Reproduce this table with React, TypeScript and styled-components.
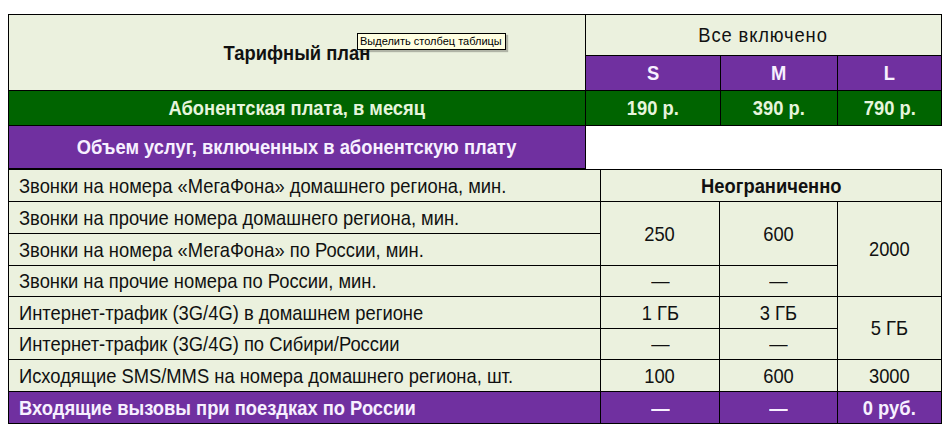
import React from "react";
import styled, { createGlobalStyle, css } from "styled-components";

const GlobalStyle = createGlobalStyle`
  html, body { margin: 0; padding: 0; background: #ffffff; }
  body { font-family: "Liberation Sans", Arial, sans-serif; }
`;

type Tone = "light" | "green" | "purple" | "blank";

const tones: Record<Tone, ReturnType<typeof css>> = {
  light: css`
    background: #ebf1de;
    color: #111111;
  `,
  green: css`
    background: #006400;
    color: #e6f5dc;
  `,
  purple: css`
    background: #7030a0;
    color: #f7f0ff;
  `,
  blank: css`
    background: #ffffff;
    border-left: none;
    border-right: none;
    border-bottom: none;
  `,
};

const Page = styled.div`
  position: relative;
  padding: 14px 0 0 8px;
  width: 932px;
`;

const Table = styled.table`
  border-collapse: collapse;
  table-layout: fixed;
  width: 933px;
  font-family: "Liberation Sans", Arial, sans-serif;
  font-size: 21px;
`;

const Row = styled.tr<{ $h: number }>`
  height: ${(p) => p.$h}px;
`;

const Cell = styled.td<{ $tone?: Tone; $bold?: boolean; $left?: boolean }>`
  border: 1px solid #000000;
  padding: 0 ${(p) => (p.$left ? "10px" : "2px")};
  text-align: ${(p) => (p.$left ? "left" : "center")};
  vertical-align: middle;
  font-weight: ${(p) => (p.$bold ? 700 : 400)};
  white-space: nowrap;
  line-height: 22px;
  ${(p) => tones[p.$tone ?? "light"]}
`;

/* narrow face: the original uses a condensed sans */
const Narrow = styled.span<{ $left?: boolean; $spread?: number }>`
  display: inline-block;
  transform: scaleX(0.874);
  transform-origin: ${(p) => (p.$left ? "left center" : "center center")};
  letter-spacing: ${(p) => p.$spread ?? 0}px;
`;

const Tooltip = styled.div`
  position: absolute;
  left: 357px;
  top: 33px;
  padding: 1px 3px 1px 2px;
  background: #ffffe1;
  border: 1px solid #000000;
  box-shadow: 2px 2px 1px rgba(0, 0, 0, 0.25);
  font-family: "Liberation Sans", Tahoma, sans-serif;
  font-size: 11px;
  line-height: 13px;
  color: #000000;
  white-space: nowrap;
`;

const topCols = [577, 135, 117, 104];
const bottomCols = [592, 119, 118, 104];

type C = {
  text?: string;
  tone?: Tone;
  bold?: boolean;
  left?: boolean;
  rowSpan?: number;
  colSpan?: number;
  spread?: number;
};

const T = ({ text, tone, bold, left, rowSpan, colSpan, spread }: C) => (
  <Cell $tone={tone} $bold={bold} $left={left} rowSpan={rowSpan} colSpan={colSpan}>
    {text ? (
      <Narrow $left={left} $spread={spread}>
        {text}
      </Narrow>
    ) : null}
  </Cell>
);

const topRows: { h: number; cells: C[] }[] = [
  {
    h: 41,
    cells: [
      { text: "Тарифный план", bold: true, rowSpan: 2 },
      { text: "Все включено", colSpan: 3, spread: 1 },
    ],
  },
  {
    h: 35,
    cells: [
      { text: "S", tone: "purple", bold: true },
      { text: "M", tone: "purple", bold: true },
      { text: "L", tone: "purple", bold: true },
    ],
  },
  {
    h: 35,
    cells: [
      { text: "Абонентская плата, в месяц", tone: "green", bold: true },
      { text: "190 р.", tone: "green", bold: true },
      { text: "390 р.", tone: "green", bold: true },
      { text: "790 р.", tone: "green", bold: true },
    ],
  },
  {
    h: 43,
    cells: [
      { text: "Объем услуг, включенных в абонентскую плату", tone: "purple", bold: true },
      { tone: "blank", colSpan: 3 },
    ],
  },
];

const bottomRows: { h: number; cells: C[] }[] = [
  {
    h: 32,
    cells: [
      { text: "Звонки на номера «МегаФона» домашнего региона, мин.", left: true },
      { text: "Неограниченно", bold: true, colSpan: 3 },
    ],
  },
  {
    h: 32,
    cells: [
      { text: "Звонки на прочие номера домашнего региона, мин.", left: true },
      { text: "250", rowSpan: 2 },
      { text: "600", rowSpan: 2 },
      { text: "2000", rowSpan: 3 },
    ],
  },
  {
    h: 32,
    cells: [{ text: "Звонки на номера «МегаФона» по России, мин.", left: true }],
  },
  {
    h: 31,
    cells: [
      { text: "Звонки на прочие номера по России, мин.", left: true },
      { text: "—" },
      { text: "—" },
    ],
  },
  {
    h: 32,
    cells: [
      { text: "Интернет-трафик (3G/4G) в домашнем регионе", left: true },
      { text: "1 ГБ" },
      { text: "3 ГБ" },
      { text: "5 ГБ", rowSpan: 2 },
    ],
  },
  {
    h: 31,
    cells: [
      { text: "Интернет-трафик (3G/4G) по Сибири/России", left: true },
      { text: "—" },
      { text: "—" },
    ],
  },
  {
    h: 32,
    cells: [
      { text: "Исходящие SMS/MMS на номера домашнего региона, шт.", left: true },
      { text: "100" },
      { text: "600" },
      { text: "3000" },
    ],
  },
  {
    h: 32,
    cells: [
      { text: "Входящие вызовы при поездках по России", tone: "purple", bold: true, left: true },
      { text: "—", tone: "purple", bold: true },
      { text: "—", tone: "purple", bold: true },
      { text: "0 руб.", tone: "purple", bold: true },
    ],
  },
];

export default function App() {
  return (
    <>
      <GlobalStyle />
      <Page>
        <Table>
          <colgroup>
            {topCols.map((w, i) => (
              <col key={i} style={{ width: w }} />
            ))}
          </colgroup>
          <tbody>
            {topRows.map((r, i) => (
              <Row key={i} $h={r.h}>
                {r.cells.map((c, j) => (
                  <T key={j} {...c} />
                ))}
              </Row>
            ))}
          </tbody>
        </Table>
        <Table>
          <colgroup>
            {bottomCols.map((w, i) => (
              <col key={i} style={{ width: w }} />
            ))}
          </colgroup>
          <tbody>
            {bottomRows.map((r, i) => (
              <Row key={i} $h={r.h}>
                {r.cells.map((c, j) => (
                  <T key={j} {...c} />
                ))}
              </Row>
            ))}
          </tbody>
        </Table>
        <Tooltip>Выделить столбец таблицы</Tooltip>
      </Page>
    </>
  );
}
